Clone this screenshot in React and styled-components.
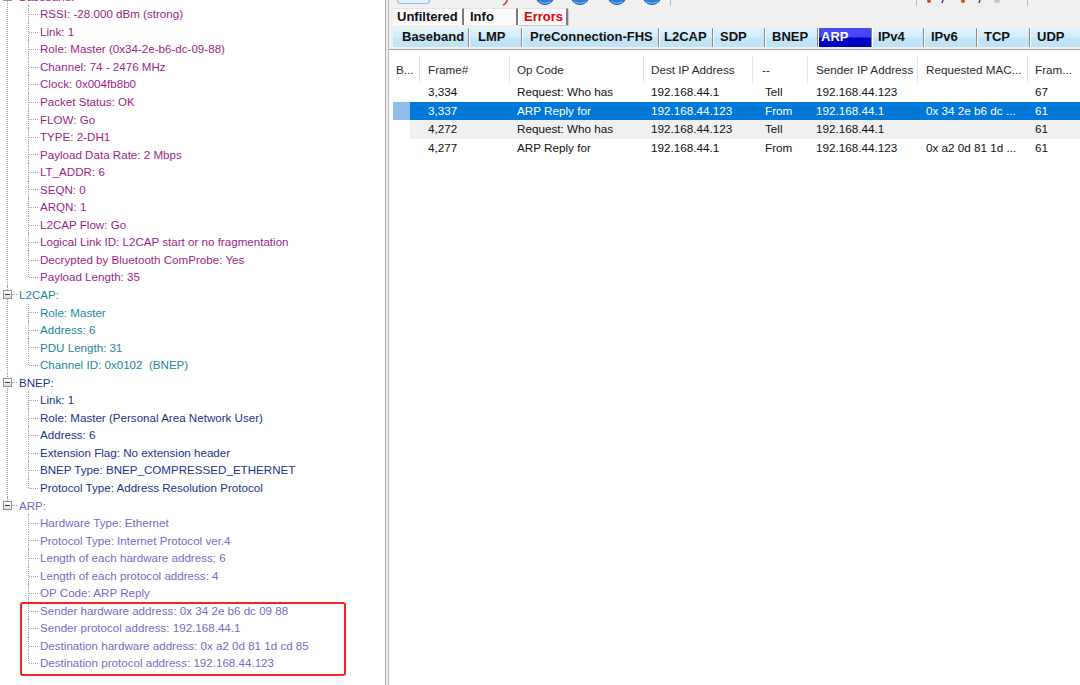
import React from 'react';
import styled, { createGlobalStyle } from 'styled-components';

const ROW = 17.55;

const tree = [
	{ title: "Baseband:", tone: "#9c1f86", items: [
		"RSSI: -28.000 dBm (strong)",
		"Link: 1",
		"Role: Master (0x34-2e-b6-dc-09-88)",
		"Channel: 74 - 2476 MHz",
		"Clock: 0x004fb8b0",
		"Packet Status: OK",
		"FLOW: Go",
		"TYPE: 2-DH1",
		"Payload Data Rate: 2 Mbps",
		"LT_ADDR: 6",
		"SEQN: 0",
		"ARQN: 1",
		"L2CAP Flow: Go",
		"Logical Link ID: L2CAP start or no fragmentation",
		"Decrypted by Bluetooth ComProbe: Yes",
		"Payload Length: 35",
	] },
	{ title: "L2CAP:", tone: "#23879a", items: [
		"Role: Master",
		"Address: 6",
		"PDU Length: 31",
		"Channel ID: 0x0102\u00a0 (BNEP)",
	] },
	{ title: "BNEP:", tone: "#22338a", items: [
		"Link: 1",
		"Role: Master (Personal Area Network User)",
		"Address: 6",
		"Extension Flag: No extension header",
		"BNEP Type: BNEP_COMPRESSED_ETHERNET",
		"Protocol Type: Address Resolution Protocol",
	] },
	{ title: "ARP:", tone: "#7a6ac6", items: [
		"Hardware Type: Ethernet",
		"Protocol Type: Internet Protocol ver.4",
		"Length of each hardware address: 6",
		"Length of each protocol address: 4",
		"OP Code: ARP Reply",
		"Sender hardware address: 0x 34 2e b6 dc 09 88",
		"Sender protocol address: 192.168.44.1",
		"Destination hardware address: 0x a2 0d 81 1d cd 85",
		"Destination protocol address: 192.168.44.123",
	] },
];

const topTabs = [
	{ label: "Unfiltered", w: 71, pad: 4 },
	{ label: "Info", w: 54, pad: 6 },
	{ label: "Errors", w: 50, pad: 6, red: true },
];

const protoTabs = [
	{ label: "Baseband", w: 76, pad: 9 },
	{ label: "LMP", w: 53, pad: 8 },
	{ label: "PreConnection-FHS", w: 137, pad: 7 },
	{ label: "L2CAP", w: 54, pad: 4 },
	{ label: "SDP", w: 52, pad: 6 },
	{ label: "BNEP", w: 53, pad: 6 },
	{ label: "ARP", w: 54, pad: 2, active: true },
	{ label: "IPv4", w: 52, pad: 5 },
	{ label: "IPv6", w: 53, pad: 6 },
	{ label: "TCP", w: 53, pad: 6 },
	{ label: "UDP", w: 60, pad: 6 },
];

// widths of the columns after the marker cell
const cols = [
	{ label: "Frame#", w: 100, pad: 18 },
	{ label: "Op Code", w: 134, pad: 7 },
	{ label: "Dest IP Address", w: 109, pad: 7 },
	{ label: "--", w: 55, pad: 9, dataPad: 12 },
	{ label: "Sender IP Address", w: 110, pad: 8 },
	{ label: "Requested MAC...", w: 110, pad: 8 },
	{ label: "Fram...", w: 52, pad: 7 },
];

const rows = [
	[ "3,334", "Request: Who has", "192.168.44.1", "Tell", "192.168.44.123", "", "67" ],
	[ "3,337", "ARP Reply for", "192.168.44.123", "From", "192.168.44.1", "0x 34 2e b6 dc ...", "61" ],
	[ "4,272", "Request: Who has", "192.168.44.123", "Tell", "192.168.44.1", "", "61" ],
	[ "4,277", "ARP Reply for", "192.168.44.1", "From", "192.168.44.123", "0x a2 0d 81 1d ...", "61" ],
];

const BlueOrb = ( { ml } ) => (
	<ToolIcon $ml={ ml } width="20" height="6" viewBox="0 0 20 6">
		<circle cx="10" cy="-5" r="9.5" fill="#2f7fd8" stroke="#1a5aa8" strokeWidth="1" />
		<path d="M4 1.5 Q10 5 16 1.5" stroke="#7fb6ef" strokeWidth="1" fill="none" />
	</ToolIcon>
);

export default function App () {

	const [ selected, setSelected ] = React.useState( 1 );

	return (
		<Window>
			<GlobalStyle />

			<TreePane>
				<Tree>
					{ tree.map( ( g, gi ) => (
						<Group key={ g.title } $last={ gi === tree.length - 1 } $first={ gi === 0 }>
							<NodeRow>
								<Expander />
								<NodeLink />
								<NodeText $tone={ g.tone }>{ g.title }</NodeText>
							</NodeRow>
							{ g.items.map( ( it, i ) => (
								<Leaf key={ i } $tone={ g.tone } $last={ i === g.items.length - 1 }>{ it }</Leaf>
							) ) }
						</Group>
					) ) }
				</Tree>
				<Callout />
			</TreePane>

			<Splitter />

			<RightPane>
				<Toolbar>
					<PressedButton />
					<ToolIcon $ml={ 72 } width="8" height="6" viewBox="0 0 8 6">
						<path d="M5 0 Q5 3 1 5" stroke="#d43a2a" strokeWidth="1.5" fill="none" />
					</ToolIcon>
					<BlueOrb ml={ 25 } />
					<BlueOrb ml={ 15 } />
					<BlueOrb ml={ 17 } />
					<BlueOrb ml={ 15 } />
					<ToolSep $ml={ 8 } />
					<ToolSep $ml={ 245 } />
					<ToolIcon $ml={ 8 } width="80" height="6" viewBox="0 0 80 6">
						<circle cx="4" cy="1" r="2" fill="#d4482a" />
						<path d="M18 0 L17 3" stroke="#3c3c9a" strokeWidth="1.5" />
						<circle cx="38" cy="1" r="2" fill="#d4482a" />
						<path d="M55 0 L54 3" stroke="#3c3c9a" strokeWidth="1.5" />
						<ellipse cx="72" cy="1" rx="3" ry="2" fill="#c8c8c8" />
					</ToolIcon>
					<ToolSep $ml={ 22 } />
				</Toolbar>

				<TopTabs>
					{ topTabs.map( t => (
						<TopTab key={ t.label } $w={ t.w } $pad={ t.pad } $red={ t.red }>{ t.label }</TopTab>
					) ) }
				</TopTabs>

				<ProtoTabs>
					{ protoTabs.map( ( t, i ) => (
						<ProtoTab key={ t.label } $w={ t.w } $pad={ t.pad } $active={ t.active } $first={ i === 0 }>{ t.label }</ProtoTab>
					) ) }
				</ProtoTabs>

				<ListArea>
					<HeaderRow>
						<HeadCell $w={ 31 } $pad={ 7 }>B...</HeadCell>
						{ cols.map( ( c, i ) => (
							<HeadCell key={ c.label } $w={ i === 0 ? 90 : c.w } $pad={ i === 0 ? 8 : c.pad } $last={ i === cols.length - 1 }>{ c.label }</HeadCell>
						) ) }
					</HeaderRow>

					{ rows.map( ( r, ri ) => (
						<DataRow key={ ri } onClick={ () => setSelected( ri ) }>
							<Marker $selected={ ri === selected } />
							<RowBody $selected={ ri === selected } $shaded={ ri === 2 }>
								{ r.map( ( v, ci ) => (
									<Cell key={ ci } $w={ cols[ ci ].w } $pad={ cols[ ci ].dataPad || cols[ ci ].pad }>{ v }</Cell>
								) ) }
							</RowBody>
						</DataRow>
					) ) }
				</ListArea>
			</RightPane>
		</Window>
	)
}

const GlobalStyle = createGlobalStyle`
	body {
		margin: 0;
		background: #ffffff;
		font-family: "Liberation Sans", Arial, sans-serif;
	}
`

const Window = styled.div`
	display: flex;
	width: 1080px;
	height: 685px;
	overflow: hidden;
`

const TreePane = styled.div`
	position: relative;
	width: 385px;
	flex-shrink: 0;
	background: #ffffff;
	overflow: hidden;
`

const Tree = styled.div`
	margin-top: -12.3px;
	font-size: 11.6px;
`

const Group = styled.div`
	position: relative;

	&::before {
		content: "";
		position: absolute;
		left: 7px;
		top: 0;
		height: ${ p => p.$last ? `${ ROW / 2 }px` : "100%" };
		border-left: 1px dotted #a0a0a0;
	}
`

const NodeRow = styled.div`
	position: relative;
	display: flex;
	align-items: center;
	height: ${ ROW }px;
	padding-left: 3px;
`

const Expander = styled.div`
	position: relative;
	z-index: 1;
	box-sizing: border-box;
	width: 9px;
	height: 9px;
	border: 1px solid #949494;
	background: linear-gradient( #ffffff, #dcdcdc );

	&::after {
		content: "";
		position: absolute;
		left: 1px;
		top: 3px;
		width: 5px;
		height: 1px;
		background: #3a3a3a;
	}
`

const NodeLink = styled.div`
	width: 5px;
	border-top: 1px dotted #a0a0a0;
	margin-right: 2px;
`

const NodeText = styled.span`
	color: ${ p => p.$tone };
	line-height: ${ ROW }px;
	white-space: nowrap;
`

const Leaf = styled.div`
	position: relative;
	height: ${ ROW }px;
	line-height: ${ ROW }px;
	padding-left: 40px;
	color: ${ p => p.$tone };
	white-space: nowrap;

	&::before {
		content: "";
		position: absolute;
		left: 28px;
		top: 0;
		height: ${ p => p.$last ? "50%" : "100%" };
		border-left: 1px dotted #a0a0a0;
	}

	&::after {
		content: "";
		position: absolute;
		left: 29px;
		top: 50%;
		width: 9px;
		border-top: 1px dotted #a0a0a0;
	}
`

const Callout = styled.div`
	position: absolute;
	left: 20px;
	top: 602px;
	width: 326px;
	height: 74px;
	box-sizing: border-box;
	border: 2.5px solid #f32424;
	border-radius: 3px;
`

const Splitter = styled.div`
	width: 2px;
	flex-shrink: 0;
	background: #f0f0f0;
	border-left: 1px solid #a8a8a8;
	border-right: 1px solid #b8b8b8;
`

const RightPane = styled.div`
	flex: 1;
	display: flex;
	flex-direction: column;
	background: #f0f0f0;
	min-width: 0;
`

const Toolbar = styled.div`
	display: flex;
	align-items: flex-start;
	height: 6px;
	overflow: hidden;
`

const ToolIcon = styled.svg`
	flex-shrink: 0;
	display: block;
	margin-left: ${ p => p.$ml || 0 }px;
`

const PressedButton = styled.div`
	width: 33px;
	height: 4px;
	margin-left: 8px;
	box-sizing: border-box;
	border: 1px solid #8fbce8;
	border-top: none;
	border-radius: 0 0 3px 3px;
	background: #e3f0fb;
`

const ToolSep = styled.div`
	width: 1px;
	height: 6px;
	margin-left: ${ p => p.$ml }px;
	background: #b8b8b8;
	flex-shrink: 0;
`

const TopTabs = styled.div`
	display: flex;
	height: 21px;
	padding: 2px 0 0 4px;
	box-sizing: border-box;
`

const TopTab = styled.div`
	width: ${ p => p.$w }px;
	height: 17px;
	box-sizing: border-box;
	padding-left: ${ p => p.$pad }px;
	background: #fbfbfb;
	border-top: 1px solid #e4e4e4;
	border-right: 2px solid #7c7c7c;
	box-shadow: ${ p => p.$red ? "1px 1px 0 #c8c8c8" : "none" };
	font-size: 13px;
	font-weight: bold;
	line-height: 16px;
	color: ${ p => p.$red ? "#e60000" : "#111111" };
	white-space: nowrap;
`

const ProtoTabs = styled.div`
	display: flex;
	height: 21px;
	padding: 1px 0 0 4px;
	box-sizing: border-box;
	overflow: hidden;
`

const ProtoTab = styled.div`
	flex-shrink: 0;
	width: ${ p => p.$w }px;
	height: 19px;
	box-sizing: border-box;
	padding-left: ${ p => p.$pad }px;
	border-left: ${ p => p.$first ? "none" : "1px solid #ffffff" };
	border-right: 1px solid #8a8a8a;
	background: ${ p => p.$active
		? "linear-gradient( #4a4af6 0%, #4444f2 48%, #0000c6 52%, #0000c0 100% )"
		: "linear-gradient( #e0f3fd 0%, #d2ecfa 45%, #c3e5f8 55%, #bfe2f6 100% )" };
	font-size: 13px;
	font-weight: bold;
	line-height: 18px;
	color: ${ p => p.$active ? "#ffffff" : "#111111" };
	white-space: nowrap;
`

const ListArea = styled.div`
	flex: 1;
	margin-top: 1px;
	border-top: 1px solid #a0a0a0;
	background: #ffffff;
	padding-top: 6px;
	font-size: 11.7px;
`

const HeaderRow = styled.div`
	display: flex;
	height: 27px;
`

const HeadCell = styled.div`
	flex-shrink: 0;
	width: ${ p => p.$w }px;
	box-sizing: border-box;
	padding-left: ${ p => p.$pad }px;
	border-right: ${ p => p.$last ? "none" : "1px solid #e5e5e5" };
	line-height: 27px;
	color: #2b2b2b;
	white-space: nowrap;
	overflow: hidden;
`

const DataRow = styled.div`
	display: flex;
	height: 18.5px;
	line-height: 18.5px;
	cursor: default;
`

const Marker = styled.div`
	width: 17px;
	margin-left: 4px;
	flex-shrink: 0;
	background: ${ p => p.$selected ? "#91bdea" : "transparent" };
`

const RowBody = styled.div`
	flex: 1;
	display: flex;
	background: ${ p => p.$selected ? "#0078d7" : p.$shaded ? "#f0f0f0" : "transparent" };
	color: ${ p => p.$selected ? "#ffffff" : "#111111" };
`

const Cell = styled.div`
	flex-shrink: 0;
	width: ${ p => p.$w }px;
	box-sizing: border-box;
	padding-left: ${ p => p.$pad }px;
	white-space: nowrap;
	overflow: hidden;
`
